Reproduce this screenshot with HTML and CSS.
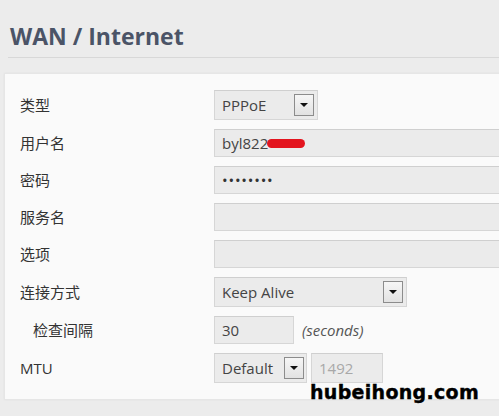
FILE: index.html
```html
<!DOCTYPE html>
<html lang="zh-CN">
<head>
<meta charset="utf-8">
<title>WAN / Internet</title>
<link rel="stylesheet" href="styles.css">
</head>
<body>
<div class="page">
  <div class="header">
    <h1 class="title">WAN / Internet</h1>
  </div>
  <div class="panel">
    <div class="form">
      <div class="label">类型</div>
      <div class="control">
        <div class="select select-type"><span class="val">PPPoE</span><span class="btn"><span class="tri"></span></span></div>
      </div>

      <div class="label">用户名</div>
      <div class="control">
        <div class="input input-wide"><span class="val">byl822</span><span class="redact"></span></div>
      </div>

      <div class="label">密码</div>
      <div class="control">
        <div class="input input-wide"><span class="dots">••••••••</span></div>
      </div>

      <div class="label">服务名</div>
      <div class="control">
        <div class="input input-wide"></div>
      </div>

      <div class="label">选项</div>
      <div class="control">
        <div class="input input-wide"></div>
      </div>

      <div class="label">连接方式</div>
      <div class="control">
        <div class="select select-mode"><span class="val">Keep Alive</span><span class="btn"><span class="tri"></span></span></div>
      </div>

      <div class="label label-sub">检查间隔</div>
      <div class="control">
        <div class="input input-short"><span class="val">30</span></div>
        <span class="unit">(seconds)</span>
      </div>

      <div class="label label-latin">MTU</div>
      <div class="control">
        <div class="select select-mtu"><span class="val">Default</span><span class="btn"><span class="tri"></span></span></div>
        <div class="input input-mtu disabled"><span class="val">1492</span></div>
      </div>
    </div>
  </div>
  <div class="watermark">hubeihong.com</div>
</div>
</body>
</html>
```

FILE: styles.css
```css
html, body {
  margin: 0;
  padding: 0;
  overflow: hidden;
}
body {
  background: #ececec;
  width: 499px;
  height: 416px;
}
.page {
  position: relative;
  width: 499px;
  height: 416px;
  overflow: hidden;
}
.header {
  margin-left: 8px;
  width: 560px;
  height: 58px;
  box-sizing: border-box;
  padding: 21px 0 0 2px;
  border-bottom: 1px solid #d8d8d8;
}
.title {
  margin: 0;
  font-family: "Open Sans", "Liberation Sans", sans-serif;
  font-weight: 700;
  font-size: 23px;
  line-height: 30px;
  color: #4b5467;
  letter-spacing: 0;
}
.panel {
  margin: 15px 0 0 4px;
  width: 560px;
  height: 327px;
  box-sizing: border-box;
  background: #fafafa;
  border: 1px solid #e6e6e6;
  box-shadow: 0 0 2px rgba(0,0,0,0.05);
  padding-top: 16px;
}
.form {
  display: grid;
  grid-template-columns: 209px 1fr;
  row-gap: 9px;
  align-items: center;
}
.label {
  padding-left: 15px;
  font-family: "Noto Sans CJK SC", "Open Sans", sans-serif;
  font-size: 15px;
  color: #333;
  line-height: 20px;
}
.label-sub {
  padding-left: 28px;
}
.label-latin {
  font-family: "Open Sans", "Noto Sans CJK SC", sans-serif;
}
.control {
  display: flex;
  align-items: center;
  gap: 8px;
  font-family: "Open Sans", "Liberation Sans", sans-serif;
  font-size: 15px;
  color: #444;
}
.input, .select {
  box-sizing: border-box;
  background: #ebebeb;
  border: 1px solid #d6d6d6;
  border-top-color: #cfcfcf;
  display: flex;
  align-items: center;
  padding-left: 7px;
}
.input {
  height: 28px;
}
.select {
  height: 30px;
  padding-right: 3px;
}
.input-wide { width: 330px; }
.input-short { width: 80px; }
.input-mtu {
  width: 72px;
  margin-left: -4px;
  height: 30px;
}
.select-type { width: 104px; }
.select-mode { width: 193px; }
.select-mtu { width: 93px; padding-right: 2px; }
.val {
  line-height: 20px;
  white-space: nowrap;
}
.disabled .val { color: #a8a8a8; }
.btn {
  margin-left: auto;
  width: 20px;
  height: 22px;
  box-sizing: border-box;
  border: 1px solid #8c8c8c;
  background: linear-gradient(#f6f6f6, #e2e2e2);
  display: flex;
  align-items: center;
  justify-content: center;
}
.tri {
  width: 0;
  height: 0;
  border-left: 4px solid transparent;
  border-right: 4px solid transparent;
  border-top: 4px solid #111;
}
.redact {
  display: inline-block;
  width: 38px;
  height: 9px;
  margin-left: -1px;
  margin-top: 1px;
  background: #e3141e;
  border-radius: 5px;
  filter: blur(0.5px);
}
.dots {
  font-size: 15px;
  letter-spacing: 0.8px;
  color: #333;
  line-height: 20px;
}
.unit {
  font-style: italic;
  color: #555;
  margin-left: 0;
}
.watermark {
  position: absolute;
  left: 310px;
  top: 380px;
  font-family: "DejaVu Sans", sans-serif;
  font-weight: 700;
  font-size: 19px;
  line-height: 24px;
  letter-spacing: 0.3px;
  color: #000;
  -webkit-text-stroke: 0.4px #000;
}
```
